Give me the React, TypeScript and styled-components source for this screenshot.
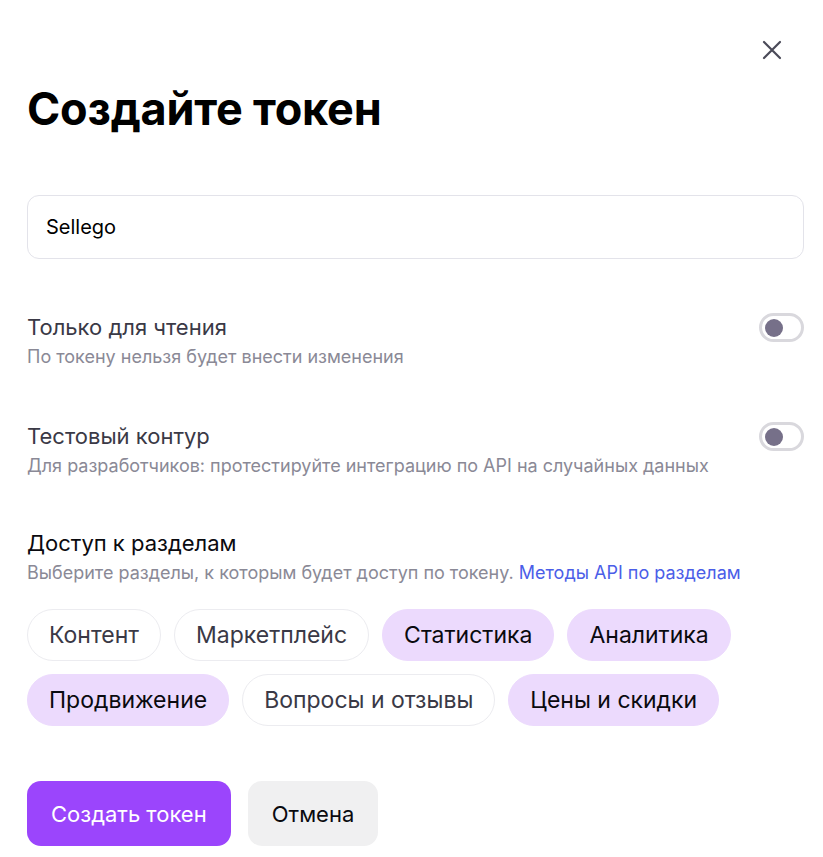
import React, { useState } from "react";
import styled, { createGlobalStyle } from "styled-components";

const GlobalStyle = createGlobalStyle`
  html, body {
    margin: 0;
    padding: 0;
    background: #fff;
    font-family: Inter, "Noto Sans", sans-serif;
  }
`;

const Modal = styled.div`
  position: relative;
  box-sizing: border-box;
  width: 823px;
  padding: 81px 19px 0 27px;
`;

const CloseButton = styled.button`
  position: absolute;
  top: 36px;
  right: 37px;
  width: 28px;
  height: 28px;
  padding: 0;
  border: none;
  background: none;
  display: flex;
  align-items: center;
  justify-content: center;
  cursor: pointer;
`;

const Title = styled.h1`
  margin: 0;
  font-size: 45px;
  line-height: 56px;
  font-weight: 700;
  color: #000;
  letter-spacing: -0.2px;
`;

const NameInput = styled.input`
  box-sizing: border-box;
  display: block;
  width: 100%;
  height: 64px;
  margin-top: 58px;
  padding: 0 18px;
  border: 1.5px solid #e3e3ea;
  border-radius: 12px;
  font-family: inherit;
  font-size: 20px;
  color: #000;
  outline: none;
`;

const OptionRow = styled.div`
  display: flex;
  justify-content: space-between;
  align-items: flex-start;
  margin-top: 54px;

  & + & {
    margin-top: 53px;
  }
`;

const OptionText = styled.div`
  display: flex;
  flex-direction: column;
  gap: 4px;
`;

const OptionLabel = styled.div<{ $dark?: boolean }>`
  font-size: 22px;
  line-height: 28px;
  color: ${(p) => (p.$dark ? "#0a0a0f" : "#3a3946")};
`;

const OptionHint = styled.div`
  font-size: 18px;
  line-height: 24px;
  color: #8a8996;
`;

const HintLink = styled.a`
  color: #4b5ee8;
  text-decoration: none;
`;

const Toggle = styled.button<{ $on: boolean }>`
  position: relative;
  box-sizing: border-box;
  flex: none;
  width: 45px;
  height: 29px;
  padding: 0;
  border: 3px solid ${(p) => (p.$on ? "#9b45fc" : "#d9d8dd")};
  border-radius: 15px;
  background: #fff;
  cursor: pointer;

  &::after {
    content: "";
    position: absolute;
    top: 2.5px;
    left: ${(p) => (p.$on ? "19px" : "2.5px")};
    width: 18px;
    height: 18px;
    border-radius: 50%;
    background: ${(p) => (p.$on ? "#9b45fc" : "#767089")};
  }
`;

const Section = styled.div`
  margin-top: 51px;
  display: flex;
  flex-direction: column;
  gap: 4px;
`;

const Chips = styled.div`
  display: flex;
  flex-wrap: wrap;
  gap: 13px;
  margin-top: 24px;
`;

const Chip = styled.button<{ $selected: boolean }>`
  box-sizing: border-box;
  height: 52px;
  padding: 0 21px;
  border-radius: 26px;
  border: 1.5px solid ${(p) => (p.$selected ? "#ecdafd" : "#ececf0")};
  background: ${(p) => (p.$selected ? "#ecdafd" : "#fff")};
  color: ${(p) => (p.$selected ? "#0a0a0f" : "#3a3946")};
  font-family: inherit;
  font-size: 23px;
  cursor: pointer;
`;

const Actions = styled.div`
  display: flex;
  gap: 17px;
  margin-top: 55px;
`;

const Button = styled.button<{ $primary?: boolean }>`
  height: 65px;
  padding: 0 24px;
  border: none;
  border-radius: 14px;
  background: ${(p) => (p.$primary ? "#9b45fc" : "#f0f0f1")};
  color: ${(p) => (p.$primary ? "#fff" : "#0a0a0f")};
  font-family: inherit;
  font-size: 22px;
  cursor: pointer;
`;

const sections = [
  { name: "Контент", on: false },
  { name: "Маркетплейс", on: false },
  { name: "Статистика", on: true },
  { name: "Аналитика", on: true },
  { name: "Продвижение", on: true },
  { name: "Вопросы и отзывы", on: false },
  { name: "Цены и скидки", on: true },
];

export default function App() {
  const [readOnly, setReadOnly] = useState(false);
  const [sandbox, setSandbox] = useState(false);
  const [picked, setPicked] = useState(sections.map((s) => s.on));

  return (
    <>
      <GlobalStyle />
      <Modal>
        <CloseButton aria-label="Закрыть">
          <svg width="20" height="20" viewBox="0 0 20 20" fill="none">
            <path d="M2 2L18 18M18 2L2 18" stroke="#4a4a58" strokeWidth="2.2" strokeLinecap="round" />
          </svg>
        </CloseButton>
        <Title>Создайте токен</Title>
        <NameInput defaultValue="Sellego" />

        <OptionRow>
          <OptionText>
            <OptionLabel>Только для чтения</OptionLabel>
            <OptionHint>По токену нельзя будет внести изменения</OptionHint>
          </OptionText>
          <Toggle $on={readOnly} onClick={() => setReadOnly(!readOnly)} />
        </OptionRow>
        <OptionRow>
          <OptionText>
            <OptionLabel>Тестовый контур</OptionLabel>
            <OptionHint>Для разработчиков: протестируйте интеграцию по API на случайных данных</OptionHint>
          </OptionText>
          <Toggle $on={sandbox} onClick={() => setSandbox(!sandbox)} />
        </OptionRow>

        <Section>
          <OptionLabel $dark>Доступ к разделам</OptionLabel>
          <OptionHint>
            Выберите разделы, к которым будет доступ по токену.{" "}
            <HintLink href="#">Методы API по разделам</HintLink>
          </OptionHint>
        </Section>
        <Chips>
          {sections.map((s, i) => (
            <Chip
              key={s.name}
              $selected={picked[i]}
              onClick={() => setPicked(picked.map((v, j) => (j === i ? !v : v)))}
            >
              {s.name}
            </Chip>
          ))}
        </Chips>

        <Actions>
          <Button $primary>Создать токен</Button>
          <Button>Отмена</Button>
        </Actions>
      </Modal>
    </>
  );
}
